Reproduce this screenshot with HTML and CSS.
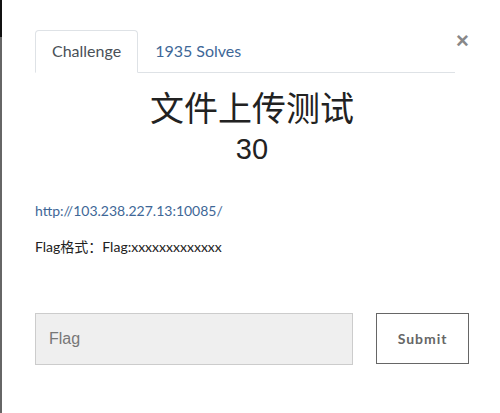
FILE: index.html
```html
<!DOCTYPE html>
<html lang="zh">
<head>
    <meta charset="UTF-8">
    <meta name="viewport" content="width=device-width, initial-scale=1.0">
    <title>Challenge</title>
    <link rel="stylesheet" href="styles.css">
</head>
<body>
    <div class="edge"></div>
    <div class="modal">
        <div class="modal-header">
            <ul class="tabs">
                <li class="tab active">Challenge</li>
                <li class="tab"><a href="#solves">1935 Solves</a></li>
            </ul>
            <button class="close">&times;</button>
        </div>
        <h2 class="title">文件上传测试</h2>
        <h3 class="value">30</h3>
        <p class="link"><a href="#">http://103.238.227.13:10085/</a></p>
        <p class="desc">Flag格式：Flag:xxxxxxxxxxxxx</p>
        <div class="submit-row">
            <input type="text" class="flag-input" placeholder="Flag">
            <button class="submit">Submit</button>
        </div>
    </div>
</body>
</html>
```

FILE: styles.css
```css
body {
    margin: 0;
    padding: 0;
    display: flex;
    min-height: 413px;
    background: #fff;
    font-family: Lato, "Noto Sans CJK SC", sans-serif;
    color: #212529;
}
.edge {
    width: 2px;
    flex-shrink: 0;
    background: linear-gradient(to bottom, #111 0, #111 37px, #666 37px, #666 100%);
}
.modal {
    width: 434px;
    padding: 30px 0 0 33px;
}
.modal-header {
    display: flex;
    align-items: flex-start;
}
.tabs {
    display: flex;
    list-style: none;
    margin: 0;
    padding: 0;
    width: 420px;
    border-bottom: 1px solid #dee2e6;
}
.tab {
    padding: 9px 16px 11px;
    line-height: 21px;
    font-size: 16px;
    border: 1px solid transparent;
    border-radius: 4px 4px 0 0;
    margin-bottom: -1px;
}
.tab.active {
    color: #495057;
    border-color: #dee2e6 #dee2e6 #fff;
    background: #fff;
}
.tab a {
    color: #3e6797;
    text-decoration: none;
}
.close {
    border: none;
    background: none;
    padding: 0;
    margin: 0 0 0 1px;
    font-size: 22px;
    font-weight: bold;
    line-height: 22px;
    color: #888;
    font-family: "Liberation Sans", sans-serif;
    cursor: pointer;
}
.title {
    margin: 16px 0 0;
    text-align: center;
    font-family: "Liberation Sans", "Noto Sans CJK SC", sans-serif;
    font-weight: normal;
    font-size: 34px;
    line-height: 40px;
    color: #222;
}
.value {
    margin: 3px 0 0;
    text-align: center;
    font-family: "Liberation Sans", sans-serif;
    font-weight: normal;
    font-size: 29px;
    line-height: 34px;
    color: #222;
}
.link {
    margin: 35px 0 0;
    font-size: 14px;
    line-height: 20px;
}
.link a {
    color: #3e6797;
    text-decoration: none;
}
.desc {
    margin: 16px 0 0;
    font-size: 14px;
    line-height: 20px;
    color: #222;
}
.submit-row {
    display: flex;
    align-items: flex-start;
    margin-top: 56px;
}
.flag-input {
    box-sizing: border-box;
    width: 319px;
    height: 52px;
    padding: 0 13px;
    border: 1px solid #ccc;
    background: #efefef;
    font-family: "Liberation Sans", sans-serif;
    font-size: 16px;
    color: #555;
}
.flag-input::placeholder {
    color: #777;
}
.submit {
    box-sizing: border-box;
    margin-left: 23px;
    width: 93px;
    height: 51px;
    border: 1px solid #666;
    background: #fff;
    color: #666;
    font-family: Lato, sans-serif;
    font-weight: bold;
    font-size: 14px;
    letter-spacing: 1px;
    cursor: pointer;
}
```
